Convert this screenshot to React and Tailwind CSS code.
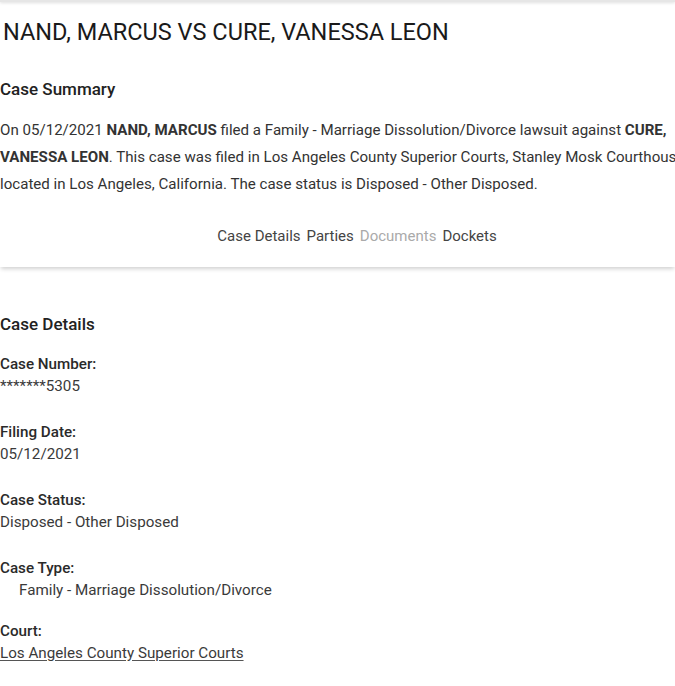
export default function App() {
  const details = [
    { label: "Case Number:", value: "*******5305" },
    { label: "Filing Date:", value: "05/12/2021" },
    { label: "Case Status:", value: "Disposed - Other Disposed" },
    { label: "Case Type:", value: "Family - Marriage Dissolution/Divorce", indent: true },
    { label: "Court:", value: "Los Angeles County Superior Courts", link: true },
  ];

  return (
    <div className="min-h-[686px] w-[675px] overflow-hidden bg-white font-['Roboto',sans-serif] text-[#222]">
      <div className="h-[2px] w-full bg-[#e6e6e6] shadow-[0_1px_3px_rgba(0,0,0,0.15)]" />
      <div className="shadow-[0_3px_4px_-1px_rgba(0,0,0,0.18)] pb-[21px]">
        <h1 className="mt-[17px] pl-[3px] text-[23.5px] font-normal leading-[26px] text-[#1a1a1a]">
          NAND, MARCUS VS CURE, VANESSA LEON
        </h1>
        <h2 className="mt-[33px] text-[17px] font-medium leading-[22px] text-[#222]">Case Summary</h2>
        <p className="mt-[17px] whitespace-nowrap text-[15.1px] leading-[27px] text-[#333]">
          On 05/12/2021 <b className="font-bold">NAND, MARCUS</b> filed a Family - Marriage Dissolution/Divorce lawsuit against <b className="font-bold">CURE,</b>
          <br />
          <b className="font-bold">VANESSA LEON</b>. This case was filed in Los Angeles County Superior Courts, Stanley Mosk Courthouse,
          <br />
          located in Los Angeles, California. The case status is Disposed - Other Disposed.
        </p>
        <nav className="mt-[28px] flex justify-center gap-[6px] pl-[39px] text-[15px] leading-[20px] text-[#444]">
          <span>Case Details</span>
          <span>Parties</span>
          <span className="text-[#aaa]">Documents</span>
          <span>Dockets</span>
        </nav>
      </div>

      <section className="pt-[46px]">
        <h2 className="text-[17px] font-medium leading-[22px] text-[#222]">Case Details</h2>
        <div className="mt-[18px] flex flex-col">
          {details.map((d) => (
            <div key={d.label} className={"text-[15.2px] leading-[22px] " + (d.indent ? "mb-[19px]" : "mb-[24px]")}>
              <div className="font-medium text-[#2a2a2a]">{d.label}</div>
              <div
                className={
                  "text-[#3a3a3a] " +
                  (d.indent ? "pl-[19px] " : "") +
                  (d.link ? "underline decoration-[#555] underline-offset-2" : "")
                }
              >
                {d.value}
              </div>
            </div>
          ))}
        </div>
      </section>
    </div>
  );
}
